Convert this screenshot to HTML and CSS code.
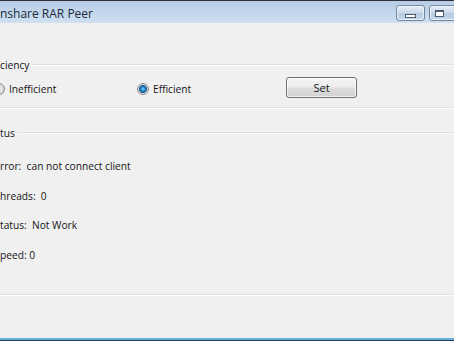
FILE: index.html
```html
<!DOCTYPE html>
<html lang="en">
<head>
    <meta charset="UTF-8">
    <title>RAR Peer</title>
    <link rel="stylesheet" href="styles.css">
</head>
<body>
    <div class="window">
        <div class="titlebar">
            <span class="title">nshare RAR Peer</span>
            <div class="caption-buttons">
                <div class="cap-btn"><span class="icon-min"></span></div>
                <div class="cap-btn cap-max"><span class="icon-max"></span></div>
            </div>
        </div>

        <div class="content">
            <div class="group">
                <div class="group-head">
                    <span class="group-label">ciency</span>
                    <span class="group-line"></span>
                </div>
                <div class="radio-row">
                    <label class="radio radio-cut"><span class="dot"></span>Inefficient</label>
                    <label class="radio radio-on"><span class="dot"></span>Efficient</label>
                    <button class="btn">Set</button>
                </div>
            </div>
            <div class="rule rule-group1"></div>

            <div class="group">
                <div class="group-head">
                    <span class="group-label">tus</span>
                    <span class="group-line"></span>
                </div>
                <div class="status-list">
                    <div class="status-row">rror:  can not connect client</div>
                    <div class="status-row">hreads:  0</div>
                    <div class="status-row">tatus:  Not Work</div>
                    <div class="status-row">peed: 0</div>
                </div>
            </div>
            <div class="rule rule-group2"></div>
        </div>

        <div class="frame-bottom"></div>
    </div>
</body>
</html>
```

FILE: styles.css
```css
* {
    margin: 0;
    padding: 0;
    box-sizing: border-box;
}

html, body {
    width: 454px;
    height: 341px;
    overflow: hidden;
}

body {
    background: #f0f0f0;
    font-family: "Open Sans", "Noto Sans", sans-serif;
    font-size: 10.2px;
    color: #151515;
}

.window {
    height: 341px;
    display: flex;
    flex-direction: column;
}

.titlebar {
    height: 23px;
    flex-shrink: 0;
    display: flex;
    align-items: flex-start;
    justify-content: space-between;
    border-top: 1px solid #2e3238;
    background: linear-gradient(180deg, #b7cce6 0%, #c4d7ec 55%, #d0e0f0 100%);
}

.title {
    font-size: 12px;
    line-height: 17px;
    padding-top: 4px;
    color: #1b2a3a;
}

.caption-buttons {
    display: flex;
    gap: 4px;
    padding-top: 4px;
    margin-right: -4px;
}

.cap-btn {
    width: 29px;
    height: 16px;
    border: 1px solid #72869e;
    border-radius: 3px;
    background: linear-gradient(180deg, #e3ecf6 0%, #cbd9ea 50%, #b8cbe1 51%, #c6d7ea 100%);
    box-shadow: inset 0 0 0 1px rgba(255, 255, 255, 0.6);
    display: flex;
    align-items: center;
    justify-content: center;
}

.icon-min {
    width: 11px;
    height: 4px;
    margin-top: 5px;
    background: #ffffff;
    border: 1px solid #4c5b6e;
}

.icon-max {
    width: 9px;
    height: 7px;
    background: #ffffff;
    border: 1px solid #4c5b6e;
    border-top-width: 2px;
    margin-right: 8px;
}

.content {
    padding-top: 35px;
}

.group-head {
    display: flex;
    align-items: center;
    height: 14px;
}

.group-label {
    line-height: 14px;
    padding-right: 3px;
}

.group-line {
    flex: 1;
    height: 2px;
    border-top: 1px solid #d5dfe5;
    border-bottom: 1px solid #ffffff;
}

.radio-row {
    display: flex;
    align-items: center;
    height: 20px;
    margin-top: 5px;
}

.radio {
    display: flex;
    align-items: center;
    gap: 4px;
    padding-top: 3px;
    line-height: 14px;
}

.radio-cut {
    width: 144px;
    margin-left: -7px;
}

.radio-on {
    width: 149px;
}

.dot {
    width: 12px;
    height: 12px;
    border-radius: 50%;
    border: 1px solid #8a8b8c;
    background: radial-gradient(circle, #f2f2f2 0%, #d6d6d6 70%, #f4f4f4 100%);
}

.radio-on .dot {
    background: radial-gradient(circle, #7fd2ff 0%, #1b86d0 32%, #1a4f86 52%, #d8d8d8 60%, #f2f2f2 100%);
}

.btn {
    width: 71px;
    height: 21px;
    border: 1px solid #707070;
    border-radius: 3px;
    background: linear-gradient(180deg, #f4f4f4 0%, #ececec 48%, #dedede 52%, #d2d2d2 100%);
    box-shadow: inset 0 0 0 1px rgba(255, 255, 255, 0.7);
    font-family: inherit;
    font-size: 11px;
    color: #151515;
}

.rule {
    height: 2px;
    border-top: 1px solid #dce3e8;
    border-bottom: 1px solid #ffffff;
}

.rule-group1 {
    margin-top: 10px;
}

.group + .rule + .group {
    margin-top: 17px;
}

.status-list {
    display: flex;
    flex-direction: column;
    gap: 15.7px;
    margin-top: 19px;
}

.status-row {
    line-height: 14px;
    white-space: pre;
}

.rule-group2 {
    margin-top: 32px;
}

.frame-bottom {
    margin-top: auto;
    height: 3px;
    border-top: 2px solid #5fb0dc;
    border-bottom: 1px solid #2a3f52;
}
```
